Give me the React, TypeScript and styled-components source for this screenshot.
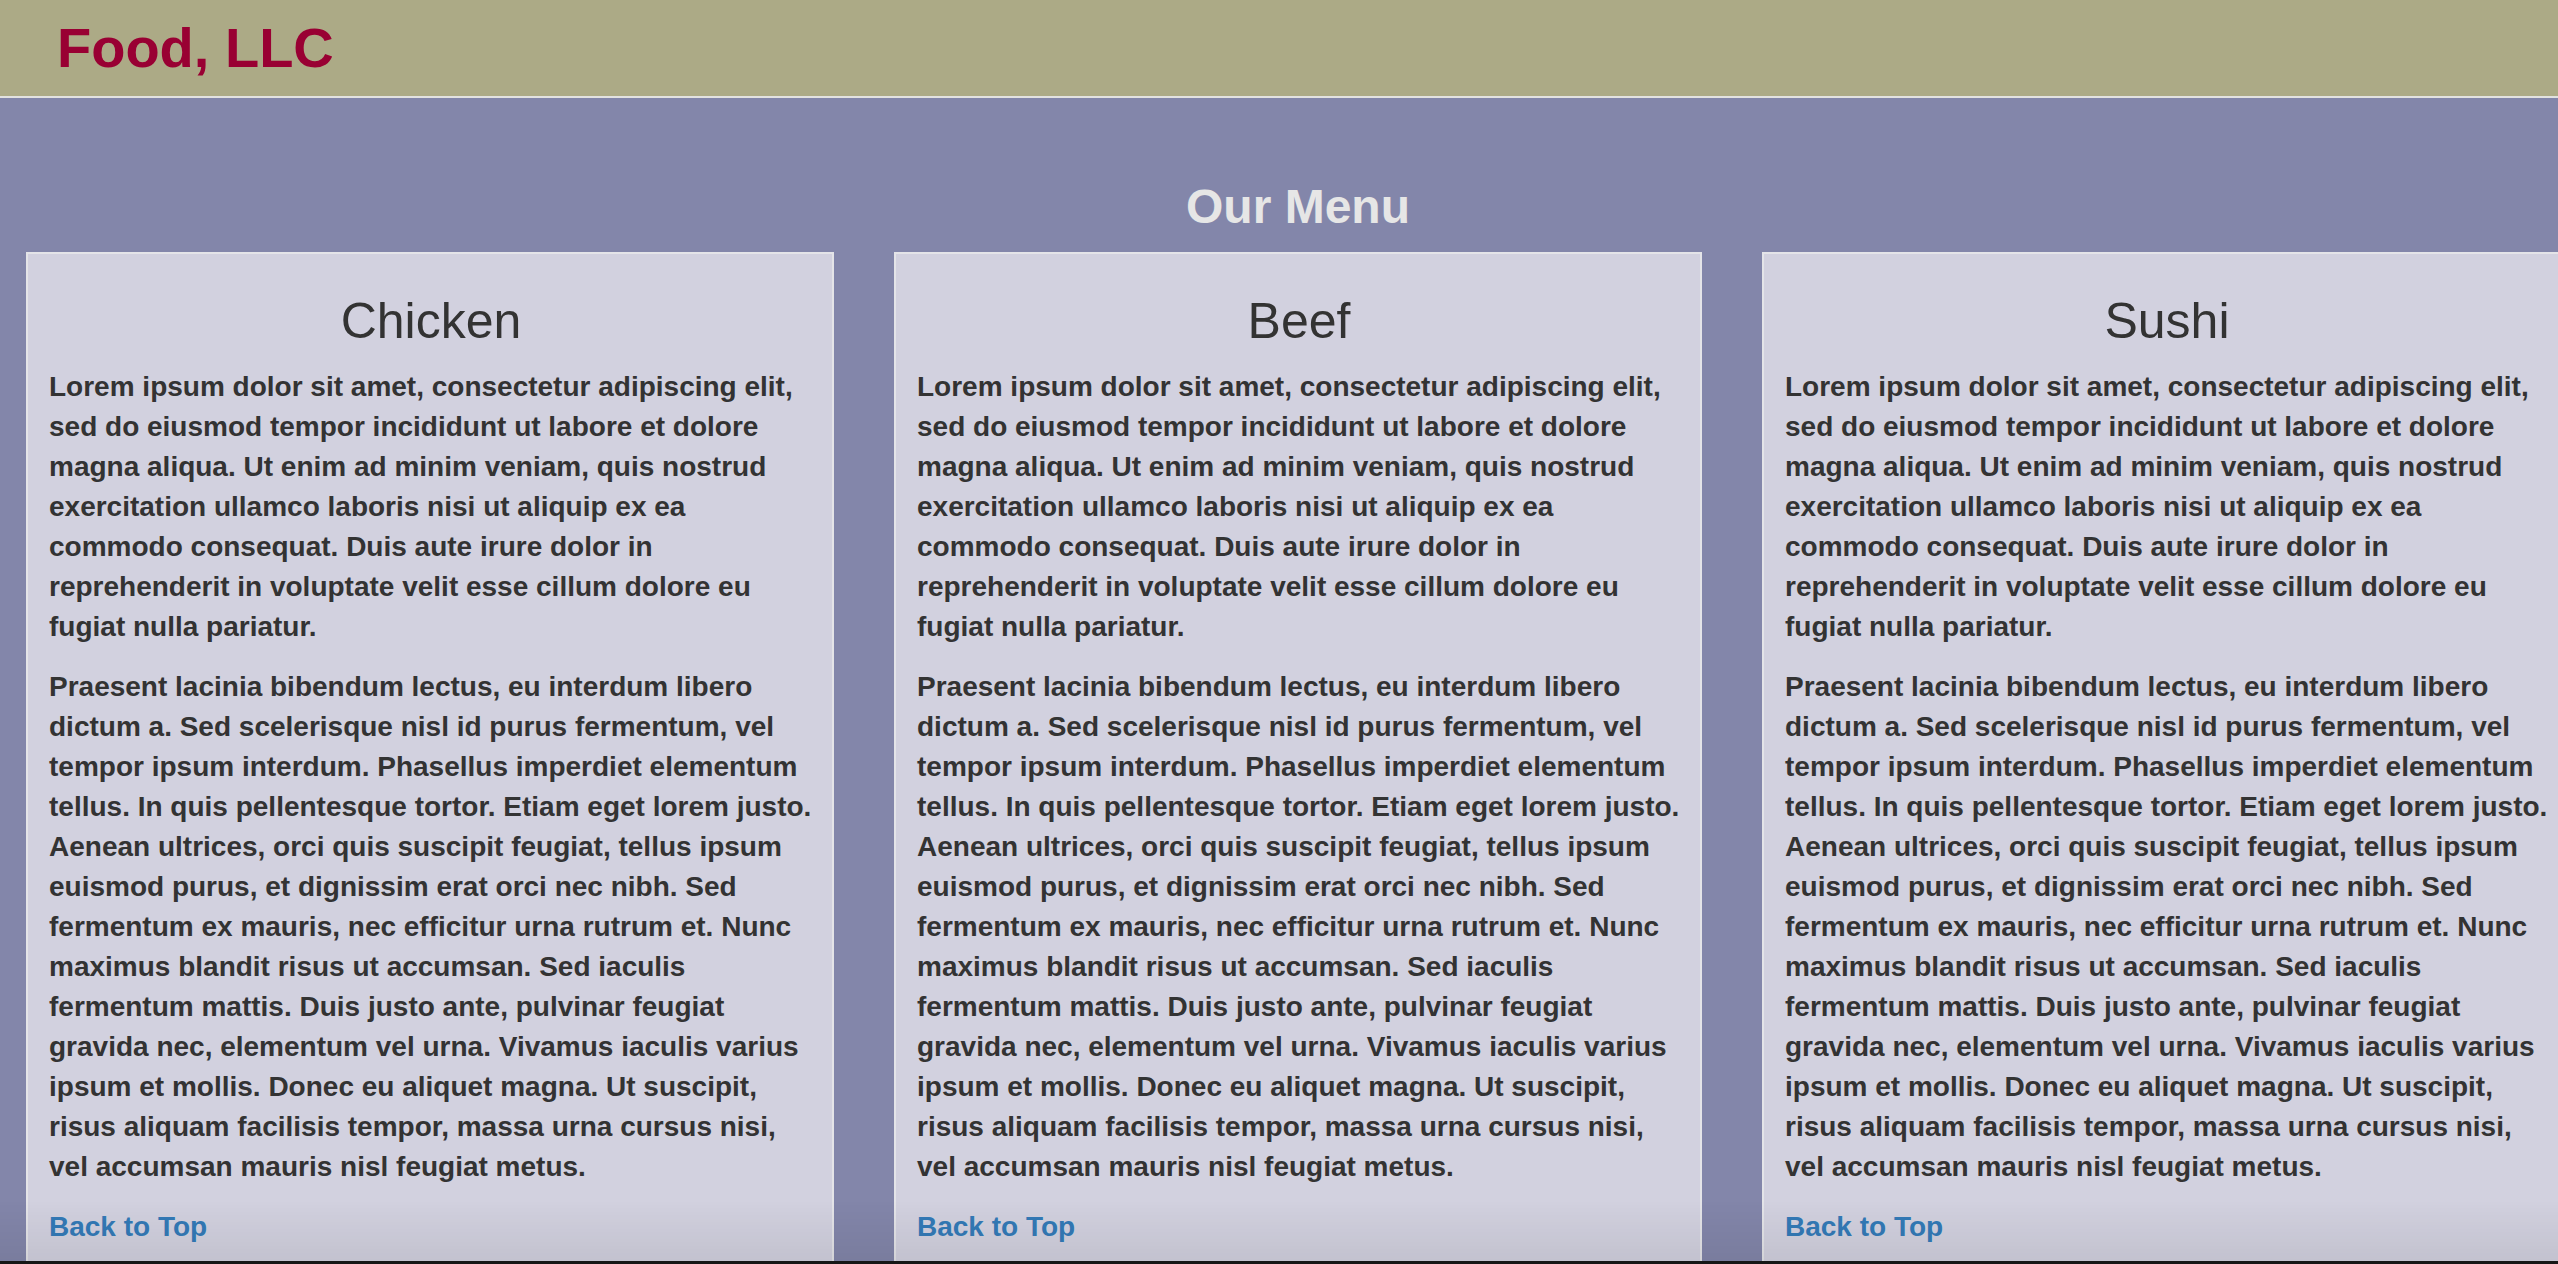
import React from "react";
import styled, { createGlobalStyle } from "styled-components";

const dishes = ["Chicken", "Beef", "Sushi"];

const intro =
   "Lorem ipsum dolor sit amet, consectetur adipiscing elit, sed do eiusmod tempor incididunt ut labore et dolore magna aliqua. Ut enim ad minim veniam, quis nostrud exercitation ullamco laboris nisi ut aliquip ex ea commodo consequat. Duis aute irure dolor in reprehenderit in voluptate velit esse cillum dolore eu fugiat nulla pariatur.";

const details =
   "Praesent lacinia bibendum lectus, eu interdum libero dictum a. Sed scelerisque nisl id purus fermentum, vel tempor ipsum interdum. Phasellus imperdiet elementum tellus. In quis pellentesque tortor. Etiam eget lorem justo. Aenean ultrices, orci quis suscipit feugiat, tellus ipsum euismod purus, et dignissim erat orci nec nibh. Sed fermentum ex mauris, nec efficitur urna rutrum et. Nunc maximus blandit risus ut accumsan. Sed iaculis fermentum mattis. Duis justo ante, pulvinar feugiat gravida nec, elementum vel urna. Vivamus iaculis varius ipsum et mollis. Donec eu aliquet magna. Ut suscipit, risus aliquam facilisis tempor, massa urna cursus nisi, vel accumsan mauris nisl feugiat metus.";

const GlobalStyle = createGlobalStyle`
   * {
      box-sizing: border-box;
   }

   html, body {
      margin: 0;
      padding: 0;
      overflow: hidden;
      background: #8386aa;
   }

   body {
      font-family: "Liberation Sans", Arial, Helvetica, sans-serif;
      font-size: 28px;
      line-height: 40px;
      color: #333;
   }
`;

const App = () => {
   return (
      <>
         <GlobalStyle />
         <Header id="top">
            <Logo>Food, LLC</Logo>
         </Header>

         <Main>
            <Row>
               <MenuTitle>Our Menu</MenuTitle>
               <Columns>
                  {dishes.map((dish) => (
                     <Column key={dish}>
                        <Card>
                           <DishName>{dish}</DishName>
                           <Text>{intro}</Text>
                           <Text>{details}</Text>
                           <Text>
                              <TopLink href="#top">Back to Top</TopLink>
                           </Text>
                        </Card>
                     </Column>
                  ))}
               </Columns>
            </Row>
         </Main>

         <BottomShade />
      </>
   );
};

const Header = styled.header`
   height: 98px;
   padding: 17px 0 0 57px;
   background: #acaa86;
   border-bottom: 2px solid #e2e2e0;
`;

const Logo = styled.h1`
   margin: 0;
   font-size: 56px;
   line-height: 1.1;
   font-weight: 700;
   color: #990033;
`;

const Main = styled.main`
   padding-top: 83px;
`;

const Row = styled.section`
   width: 2604px;
   margin-left: -4px;
`;

const MenuTitle = styled.h2`
   margin: 0 0 18px;
   text-align: center;
   font-size: 48px;
   line-height: 1.1;
   font-weight: 700;
   color: #e6e6e6;
`;

const Columns = styled.div`
   display: grid;
   grid-template-columns: repeat(3, 868px);
`;

const Column = styled.div`
   padding: 0 30px;
`;

const Card = styled.article`
   background: #d2d1df;
   border: 2px solid #e4e4e8;
   padding: 0 15px 0 21px;
`;

const DishName = styled.h3`
   margin: 40px 4px 18px 0;
   text-align: center;
   font-size: 50px;
   line-height: 55px;
   font-weight: 400;
   color: #333;
`;

const Text = styled.p`
   margin: 0 0 20px;
   font-weight: 700;
`;

const TopLink = styled.a`
   color: #337ab7;
   text-decoration: none;
`;

const BottomShade = styled.div`
   position: fixed;
   left: 0;
   right: 0;
   bottom: 0;
   height: 64px;
   pointer-events: none;
   background: linear-gradient(to bottom, rgba(0, 0, 0, 0), rgba(0, 0, 0, 0.07));
   border-bottom: 3px solid #161616;
`;

export default App;
